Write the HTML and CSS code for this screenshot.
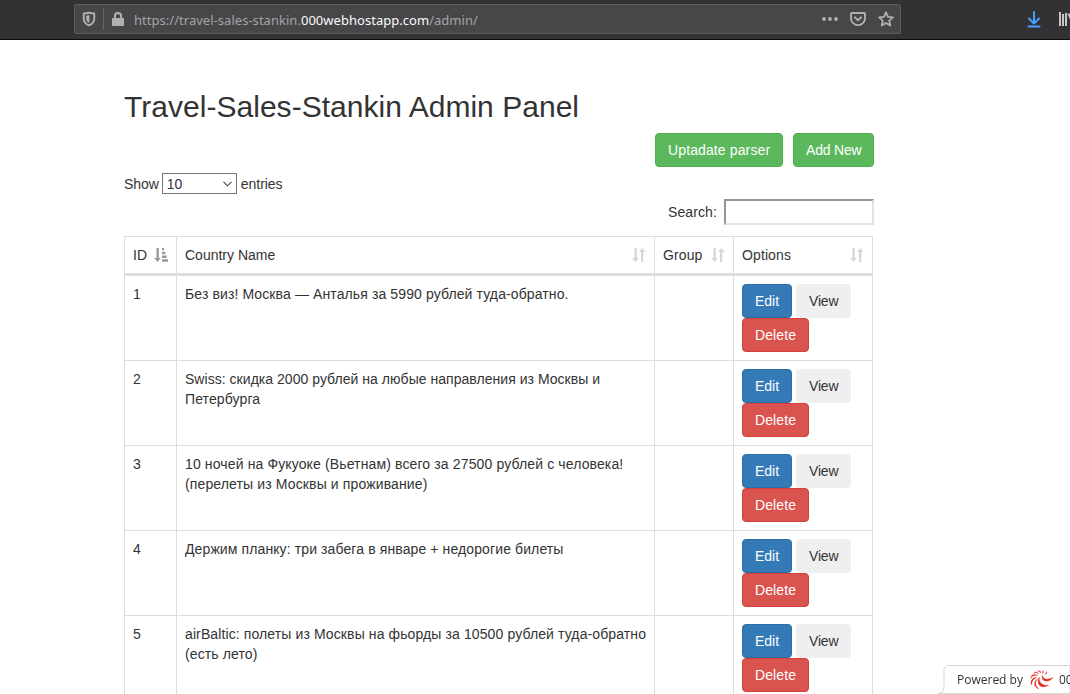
FILE: index.html
```html
<!DOCTYPE html>
<html lang="ru">
<head>
<meta charset="utf-8">
<title>Travel-Sales-Stankin Admin Panel</title>
<link rel="stylesheet" href="styles.css">
</head>
<body>
<svg class="defs" width="0" height="0">
  <symbol id="sort" viewBox="0 0 14 14"><path d="M2.500 0h2.300v10h2L3.600 14 .2 10h2.300zM9 14h2.300V4h2.500L10.200 0 7 4h2z"/></symbol>
  <symbol id="sort-asc" viewBox="0 0 14 14"><path d="M2.500 0h2.300v10h2L3.600 14 .2 10h2.300zM8 0h2v2.300H8zM8 3.800h3.200v2.400H8zM8 7.600h4.600V10H8zM8 11.300h6v2.500H8z"/></symbol>
</svg>
<header class="chrome">
  <div class="urlbar">
    <svg class="shield" width="14" height="16" viewBox="0 0 14 16"><path d="M7 1.600c1.500.6 3.200.9 5.300.9V7c0 3.800-2 6.200-5.300 7.300C3.700 13.200 1.700 10.800 1.700 7V2.500C3.800 2.500 5.500 2.200 7 1.600z" fill="none" stroke="#b1b1b3" stroke-width="1.900" stroke-linejoin="round"/><path d="M7.400 4v8C5.200 11 4.200 9.400 4.200 7V4.700C5.200 4.600 6.200 4.400 7.400 4z" fill="#b1b1b3"/></svg>
    <span class="divider"></span>
    <svg class="lock" width="12" height="14" viewBox="0 0 12 14"><path d="M2.900 7V4.200a3.100 3.100 0 0 1 6.200 0V7" fill="none" stroke="#b1b1b3" stroke-width="2"/><rect y="6" width="12" height="8" rx="1" fill="#b1b1b3"/></svg>
    <span class="url">https://travel-sales-stankin.<b>000webhostapp.com</b>/admin/</span>
    <svg class="dots" width="16" height="16" viewBox="0 0 16 16" fill="#b1b1b3"><circle cx="2" cy="8" r="1.900"/><circle cx="8" cy="8" r="1.900"/><circle cx="14" cy="8" r="1.900"/></svg>
    <svg width="16" height="16" viewBox="0 0 16 16" fill="none" stroke="#b1b1b3" stroke-width="1.900" stroke-linecap="round" stroke-linejoin="round"><path d="M2 2h12a1 1 0 0 1 1 1v4.500a7 6.600 0 0 1-14 0V3a1 1 0 0 1 1-1z"/><path d="M4.800 6.300 8 9.300l3.200-3"/></svg>
    <svg width="16" height="16" viewBox="0 0 16 16" fill="none" stroke="#b1b1b3" stroke-width="1.800" stroke-linejoin="round"><path d="m8 1.300 2 4.500 4.900.5-3.700 3.300 1.100 4.900L8 12l-4.300 2.500 1.100-4.900L1.100 6.300 6 5.800z"/></svg>
  </div>
  <div class="tools">
    <svg width="14" height="17" viewBox="0 0 14 17" fill="none" stroke="#45a1ff" stroke-width="2" stroke-linecap="round" stroke-linejoin="round"><path d="M7 1v11M2 7.500l5 5 5-5M1.500 15.500h11"/></svg>
    <svg width="16" height="16" viewBox="0 0 16 16" stroke="#c6c6c7" stroke-width="2"><path d="M2 1v14M5 3v12M8 2v13M10.500 2.500 16 15"/></svg>
  </div>
</header>
<main class="container">
  <h2>Travel-Sales-Stankin Admin Panel</h2>
  <div class="actions"><a class="btn success update">Uptadate parser</a><a class="btn success add">Add New</a></div>
  <div class="length">Show <span class="select">10<svg width="9" height="6" viewBox="0 0 9 6" fill="none" stroke="#444" stroke-width="1.100"><path d="m.5.8 4 4 4-4"/></svg></span> entries</div>
  <div class="filter">Search:<input type="text" aria-label="Search"></div>
  <table>
    <colgroup><col class="c-id"><col class="c-name"><col class="c-group"><col class="c-opt"></colgroup>
    <thead><tr>
      <th><div class="head">ID<svg class="on"><use href="#sort-asc"/></svg></div></th>
      <th><div class="head">Country Name<svg><use href="#sort"/></svg></div></th>
      <th><div class="head"><span class="wide">Group</span><svg><use href="#sort"/></svg></div></th>
      <th><div class="head"><span class="wide">Options</span><svg><use href="#sort"/></svg></div></th>
    </tr></thead>
    <tbody>
      <tr><td>1</td><td class="wide">Без виз! Москва — Анталья за 5990 рублей туда-обратно.</td><td></td><td><div class="opts"><a class="btn primary">Edit</a><a class="btn view">View</a><a class="btn danger">Delete</a></div></td></tr>
      <tr><td>2</td><td class="snug">Swiss: скидка 2000 рублей на любые направления из Москвы и<br><span class="wide">Петербурга</span></td><td></td><td><div class="opts"><a class="btn primary">Edit</a><a class="btn view">View</a><a class="btn danger">Delete</a></div></td></tr>
      <tr><td>3</td><td class="wider">10 ночей на Фукуоке (Вьетнам) всего за 27500 рублей с человека!<br>(перелеты из Москвы и проживание)</td><td></td><td><div class="opts"><a class="btn primary">Edit</a><a class="btn view">View</a><a class="btn danger">Delete</a></div></td></tr>
      <tr><td>4</td><td class="wide">Держим планку: три забега в январе + недорогие билеты</td><td></td><td><div class="opts"><a class="btn primary">Edit</a><a class="btn view">View</a><a class="btn danger">Delete</a></div></td></tr>
      <tr><td>5</td><td class="wide">airBaltic: полеты из Москвы на фьорды за 10500 рублей туда-обратно<br>(есть лето)</td><td></td><td><div class="opts"><a class="btn primary">Edit</a><a class="btn view">View</a><a class="btn danger">Delete</a></div></td></tr>
    </tbody>
  </table>
</main>
<aside class="powered">
  <svg class="tab" width="140" height="30" viewBox="0 0 140 30"><path d="M6 28.500c6 0 8-2 8-8V5.500q0-5 5-5H140v28z" fill="#fff" stroke="#d5d5d5"/></svg>
  <span class="label">Powered by</span>
  <svg class="logo" width="24" height="20" viewBox="0 0 24 20" fill="#e02b20" stroke="#e02b20" stroke-width=".4"><path d="M12.500 5.500c.5 4 5 4.800 10.500 2-3.500 5.200-12.500 5-10.500-2zM9.300 7c-.8 5 2.500 9 9.200 8.300C11.500 19.300 5.500 15 9.300 7zM7.500 9c-3 3-2.500 7 1.500 10C3.500 17 3 12 7.500 9zM6.500 7.500C3.500 8.800 1.800 11 1.500 15 0 11 2.300 7.500 6.500 7.500zM7.500 5.500C4 4.800 2 6 .8 8.500 1 5 4 3.500 7.500 5.500zM8.500 4C7 2.500 5.500 2.300 3.500 3 5.500 1.200 7.500 1.800 8.500 4zM10.500 3C10 1.800 9.300 1.200 8 1c1.800-.5 3 .3 2.500 2zM12.500 3.500c.4-1.200.3-2-.3-2.800 1.400.6 1.600 1.900.3 2.800zM15 4.300c1-.8 1.400-1.700 1.300-2.700 1 1.200.4 2.500-1.300 2.700z"/></svg>
  <span class="label">000webhost</span>
</aside>
</body>
</html>
```
FILE: styles.css
```css
* { box-sizing: border-box; }
html, body { height: 100%; }
body {
  margin: 0;
  overflow: hidden;
  background: #fff;
  color: #333;
  font: 14px/20px "Liberation Sans", Arial, sans-serif;
}
.defs { display: none; }
svg { flex: none; }

.chrome {
  display: flex;
  justify-content: space-between;
  height: 40px;
  padding: 4px 0 0 74px;
  background: #323234;
  border-bottom: 1px solid #0c0c0d;
}
.urlbar {
  display: flex;
  align-items: center;
  width: 827px;
  height: 30px;
  padding: 0 6px 0 7px;
  background: #474749;
  border: 1px solid #5c5c5e;
  border-radius: 2px;
  gap: 12px;
}
.urlbar .divider { width: 1px; height: 22px; margin-left: -5px; background: #656567; }
.urlbar .lock { margin: -1px 0 0 -4px; }
.url {
  flex: 1;
  margin-left: -2px;
  padding-top: 2px;
  color: #a4a4a6;
  font: 13px/20px "Noto Sans", "Open Sans", sans-serif;
  letter-spacing: .03px;
  white-space: nowrap;
}
.url b { color: #f9f9fa; font-weight: 400; }
.tools { display: flex; gap: 17px; width: 43px; padding-top: 7px; }

.container { width: 750px; margin-left: 124px; padding-top: 50px; }
h2 { height: 33px; margin: 0 0 10px; font-size: 30px; font-weight: 400; line-height: 33px; letter-spacing: .03px; }
.actions { display: flex; justify-content: flex-end; gap: 10px; }
.btn {
  display: inline-block;
  height: 34px;
  padding: 6px 12px;
  border: 1px solid transparent;
  border-radius: 4px;
  color: #fff;
  white-space: nowrap;
}
.success { background: #5cb85c; border-color: #4cae4c; }
.update { width: 128px; letter-spacing: .12px; }
.add { width: 81px; letter-spacing: -.2px; }
.primary { width: 50px; background: #337ab7; border-color: #2e6da4; }
.danger { width: 67px; background: #d9534f; border-color: #d43f3a; letter-spacing: .1px; }
.view { width: 55px; background: #efefef; color: #333; letter-spacing: -.2px; }

.length { display: flex; align-items: center; gap: 4px; height: 21px; margin-top: 6px; letter-spacing: -.05px; }
.select {
  display: flex;
  align-items: center;
  justify-content: space-between;
  width: 75px;
  height: 21px;
  margin-left: -1px;
  padding: 0 4px;
  border: 1px solid #767676;
}
.filter { display: flex; justify-content: flex-end; align-items: center; gap: 7px; height: 26px; margin: 5px 0 11px; letter-spacing: .1px; }
.filter input { width: 150px; height: 26px; border: 2px solid; border-color: #949494 #e3e3e3 #e3e3e3 #949494; background: #fff; outline: 0; }

table {
  width: 749px;
  table-layout: fixed;
  border: solid #ddd;
  border-width: 1px 0 0 1px;
  border-collapse: separate;
  border-spacing: 0;
}
.c-id { width: 52px; }
.c-name { width: 478px; }
.c-group { width: 79px; }
.c-opt { width: 139px; }
th, td { padding: 8px; border: solid #ddd; border-width: 0 1px 1px 0; text-align: left; vertical-align: top; font-weight: 400; white-space: nowrap; }
th { border-bottom-width: 3px; }
.wide { letter-spacing: .11px; }
.wider { letter-spacing: .13px; }
.snug { letter-spacing: .035px; }
.head { display: flex; align-items: center; justify-content: space-between; height: 20px; }
.head svg { width: 14px; height: 14px; fill: #d6d6d6; }
.head .on { fill: #999; }
.opts { display: flex; flex-wrap: wrap; column-gap: 4px; height: 68px; }

.powered { position: fixed; right: 0; bottom: 0; display: flex; align-items: center; width: 132px; height: 29px; padding-left: 19px; gap: 7px; overflow: hidden; }
.powered .tab { position: absolute; left: -8px; top: 0; }
.powered .label, .powered .logo { position: relative; }
.powered .logo { margin-right: -2px; }
.powered .label { color: #333; font: 12px/20px "Open Sans", sans-serif; white-space: nowrap; }
```
